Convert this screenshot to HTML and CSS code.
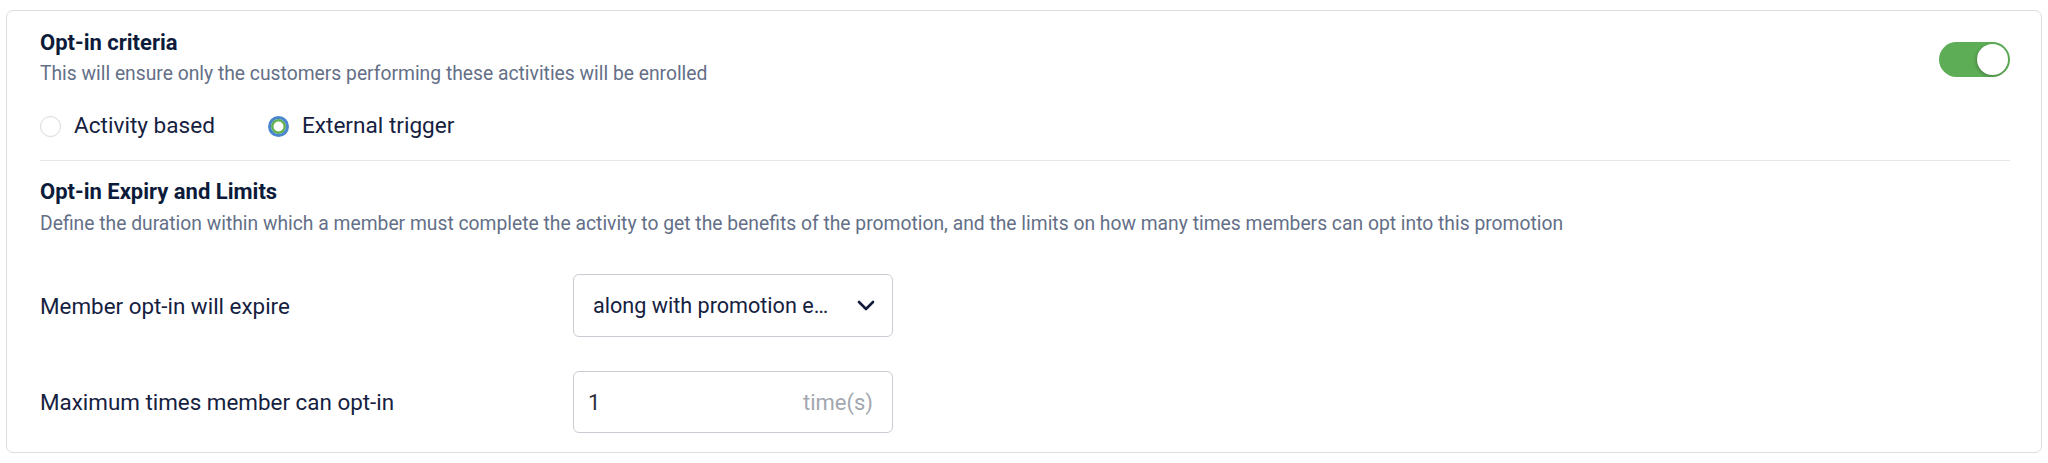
FILE: index.html
```html
<!DOCTYPE html>
<html lang="en">
<head>
<meta charset="utf-8">
<title>Opt-in criteria</title>
<link rel="stylesheet" href="styles.css">
</head>
<body>
<div class="card">
  <div class="header">
    <div class="header-text">
      <div class="title">Opt-in criteria</div>
      <div class="desc">This will ensure only the customers performing these activities will be enrolled</div>
    </div>
    <div class="toggle"><span class="knob"></span></div>
  </div>
  <div class="radios">
    <label class="radio"><span class="dot"></span><span class="radio-label">Activity based</span></label>
    <label class="radio checked"><span class="dot"></span><span class="radio-label">External trigger</span></label>
  </div>
  <div class="divider"></div>
  <div class="title title2">Opt-in Expiry and Limits</div>
  <div class="desc">Define the duration within which a member must complete the activity to get the benefits of the promotion, and the limits on how many times members can opt into this promotion</div>
  <div class="form">
    <div class="row">
      <div class="label">Member opt-in will expire</div>
      <div class="select">
        <span class="select-text">along with promotion e…</span>
        <svg class="chev" width="18" height="11" viewBox="0 0 18 11"><path d="M2 2 L9 9 L16 2" fill="none" stroke="#111c3a" stroke-width="2.6" stroke-linecap="round" stroke-linejoin="round"/></svg>
      </div>
    </div>
    <div class="row row2">
      <div class="label">Maximum times member can opt-in</div>
      <div class="input">
        <span class="value">1</span>
        <span class="suffix">time(s)</span>
      </div>
    </div>
  </div>
</div>
</body>
</html>
```

FILE: styles.css
```css
* { box-sizing: border-box; }
html, body { margin: 0; padding: 0; background: #ffffff; }
body {
  font-family: Roboto, "Noto Sans", Arial, sans-serif;
  color: #15213f;
}
.card {
  margin: 10px 6px 0 6px;
  width: 2036px;
  height: 443px;
  border: 1px solid #dcdde2;
  border-radius: 7px;
  padding: 18px 31px 19px 33px;
  background: #fff;
}
.header {
  display: flex;
  justify-content: space-between;
  align-items: flex-start;
}
.title {
  font-size: 22px;
  font-weight: 700;
  line-height: 28px;
  color: #0d1b3b;
}
.desc {
  margin-top: 4px;
  font-size: 19.3px;
  line-height: 26px;
  color: #646f87;
}
.toggle {
  margin-top: 13px;
  width: 71px;
  height: 35px;
  border-radius: 18px;
  background: #5dac56;
  position: relative;
}
.knob {
  position: absolute;
  right: 2px;
  top: 2px;
  width: 31px;
  height: 31px;
  border-radius: 50%;
  background: #fff;
  box-shadow: -1px 1px 3px rgba(0,0,0,0.25);
}
.radios {
  margin-top: 25px;
  height: 28px;
  display: flex;
  align-items: center;
  gap: 53px;
}
.radio {
  display: flex;
  align-items: center;
  gap: 13px;
}
.dot {
  width: 21px;
  height: 21px;
  border-radius: 50%;
  border: 1.5px solid #d6d8dc;
  background: #fff;
}
.radio.checked .dot {
  border: 3px solid #4a86cc;
  box-shadow: inset 0 0 0 2.5px #62b14f;
}
.radio-label {
  font-size: 22.6px;
  line-height: 28px;
  color: #15213f;
}
.divider {
  margin-top: 20px;
  height: 1px;
  background: #e6e7ea;
}
.title2 { margin-top: 17px; }
.title2 + .desc { margin-top: 5px; }
.form { margin-top: 37px; }
.row {
  display: grid;
  grid-template-columns: 533px 320px;
  align-items: center;
}
.row2 { margin-top: 34px; }
.label {
  font-size: 22.4px;
  color: #15213f;
}
.select {
  height: 63px;
  border: 1.5px solid #c9ccd3;
  border-radius: 6px;
  display: flex;
  align-items: center;
  justify-content: space-between;
  padding: 0 17px 0 19px;
}
.select-text {
  font-size: 21.6px;
  color: #15213f;
}
.input {
  height: 62px;
  border: 1.5px solid #c9ccd3;
  border-radius: 6px;
  display: flex;
  align-items: center;
  justify-content: space-between;
  padding: 0 19px 0 14px;
  font-size: 22px;
}
.value { color: #2a2f3a; }
.suffix { color: #a3a7b0; }
```
